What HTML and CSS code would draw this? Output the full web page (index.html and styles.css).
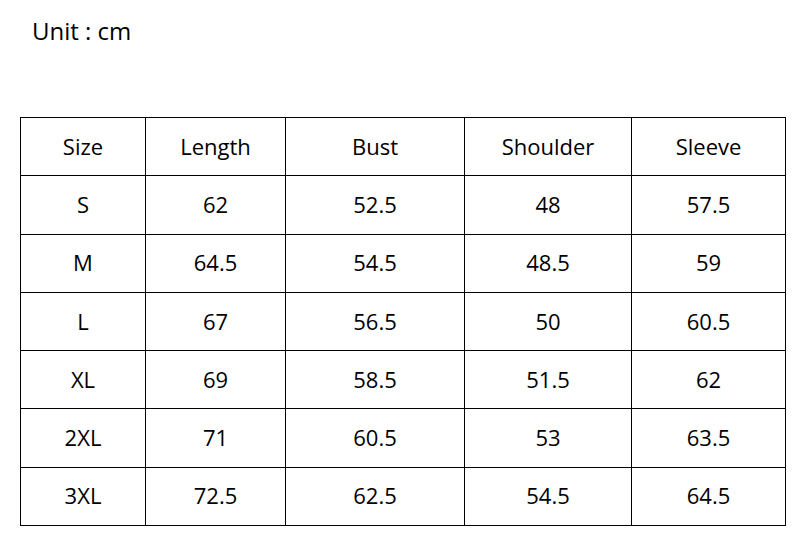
FILE: index.html
```html
<!DOCTYPE html>
<html>
<head>
<meta charset="utf-8">
<link rel="stylesheet" href="styles.css">
</head>
<body>
<div class="unit">Unit : cm</div>
<table class="size-table">
<colgroup>
<col class="c1"><col class="c2"><col class="c3"><col class="c4"><col class="c5">
</colgroup>
<tr><td>Size</td><td>Length</td><td>Bust</td><td>Shoulder</td><td>Sleeve</td></tr>
<tr><td>S</td><td>62</td><td>52.5</td><td>48</td><td>57.5</td></tr>
<tr><td>M</td><td>64.5</td><td>54.5</td><td>48.5</td><td>59</td></tr>
<tr><td>L</td><td>67</td><td>56.5</td><td>50</td><td>60.5</td></tr>
<tr><td>XL</td><td>69</td><td>58.5</td><td>51.5</td><td>62</td></tr>
<tr><td>2XL</td><td>71</td><td>60.5</td><td>53</td><td>63.5</td></tr>
<tr><td>3XL</td><td>72.5</td><td>62.5</td><td>54.5</td><td>64.5</td></tr>
</table>
</body>
</html>
```
FILE: styles.css
```css
html, body {
  margin: 0;
  padding: 0;
  background: #fff;
}
body {
  font-family: "Open Sans", sans-serif;
  color: #000;
}
.unit {
  font-size: 24px;
  line-height: 30px;
  padding: 16px 0 0 32px;
  height: 71px;
  box-sizing: border-box;
}
.size-table {
  margin: 46px 0 0 20px;
  border-collapse: collapse;
  table-layout: fixed;
  width: 765px;
  font-size: 22px;
}
.c1 { width: 125px; }
.c2 { width: 140px; }
.c3 { width: 179px; }
.c4 { width: 167px; }
.c5 { width: 154px; }
.size-table td {
  border: 1px solid #000;
  height: 55.3px;
  padding: 0 0 2px;
  text-align: center;
  vertical-align: middle;
}
```
